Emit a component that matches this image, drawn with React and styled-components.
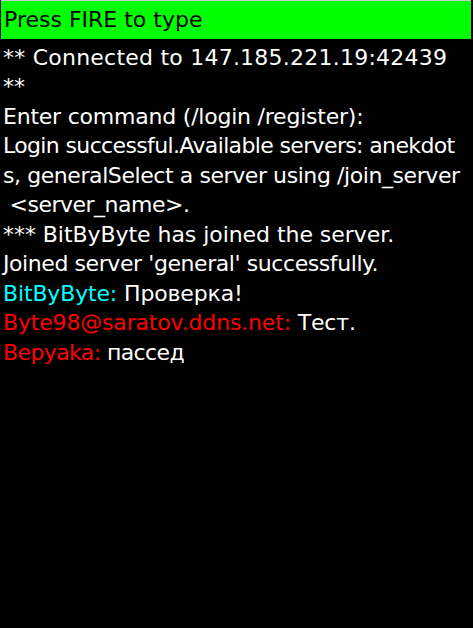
import React from 'react';
import styled, { createGlobalStyle } from 'styled-components';

const GlobalStyle = createGlobalStyle`
  html, body {
    margin: 0;
    padding: 0;
    background: #000;
  }
  body {
    width: 473px;
    height: 628px;
    overflow: hidden;
    font-family: 'DejaVu Sans', 'Liberation Sans', sans-serif;
  }
`;

const lines = [
  { tracking: 0.23, parts: [{ text: '** Connected to 147.185.221.19:42439' }] },
  { tracking: 0, parts: [{ text: '**' }] },
  { tracking: -0.22, parts: [{ text: 'Enter command (/login /register):' }] },
  { tracking: -0.64, parts: [{ text: 'Login successful.Available servers: anekdot' }] },
  { tracking: -0.42, parts: [{ text: 's, generalSelect a server using /join_server' }] },
  { tracking: -0.5, parts: [{ text: ' <server_name>.' }] },
  { tracking: -0.05, parts: [{ text: '*** BitByByte has joined the server.' }] },
  { tracking: -0.42, parts: [{ text: "Joined server 'general' successfully." }] },
  {
    tracking: -0.15,
    parts: [
      { text: 'BitByByte: ', color: '#00ffff' },
      { text: 'Проверка!' },
    ],
  },
  {
    tracking: -0.17,
    parts: [
      { text: 'Byte98@saratov.ddns.net: ', color: '#ff0000' },
      { text: 'Тест.' },
    ],
  },
  {
    tracking: -0.6,
    parts: [
      { text: 'Верyaka: ', color: '#ff0000' },
      { text: 'пассед' },
    ],
  },
];

const ChatScreen = () => {
  return (
    <Screen>
      <GlobalStyle />
      <StatusBar>Press FIRE to type</StatusBar>
      <Log>
        {lines.map((line, i) => (
          <Line key={i} $tracking={line.tracking}>
            {line.parts.map((p, j) => (
              <Part key={j} $color={p.color}>
                {p.text}
              </Part>
            ))}
          </Line>
        ))}
      </Log>
    </Screen>
  );
};

const Screen = styled.div`
  display: flex;
  flex-direction: column;
  width: 473px;
  height: 628px;
  background: #000;
  color: #fff;
  font-size: 22px;
`;

const StatusBar = styled.div`
  height: 38px;
  line-height: 38px;
  margin: 0 2px 0 1px;
  padding-left: 3px;
  background: #00ff00;
  color: #000;
  border-top: 1px solid #c8c8c8;
  white-space: pre;
`;

const Log = styled.div`
  display: flex;
  flex-direction: column;
  padding: 3.6px 0 0 3px;
`;

const Line = styled.div`
  height: 29.5px;
  line-height: 29.5px;
  white-space: pre;
  letter-spacing: ${(p) => p.$tracking}px;
`;

const Part = styled.span`
  color: ${(p) => p.$color || '#fff'};
`;

export default ChatScreen;
